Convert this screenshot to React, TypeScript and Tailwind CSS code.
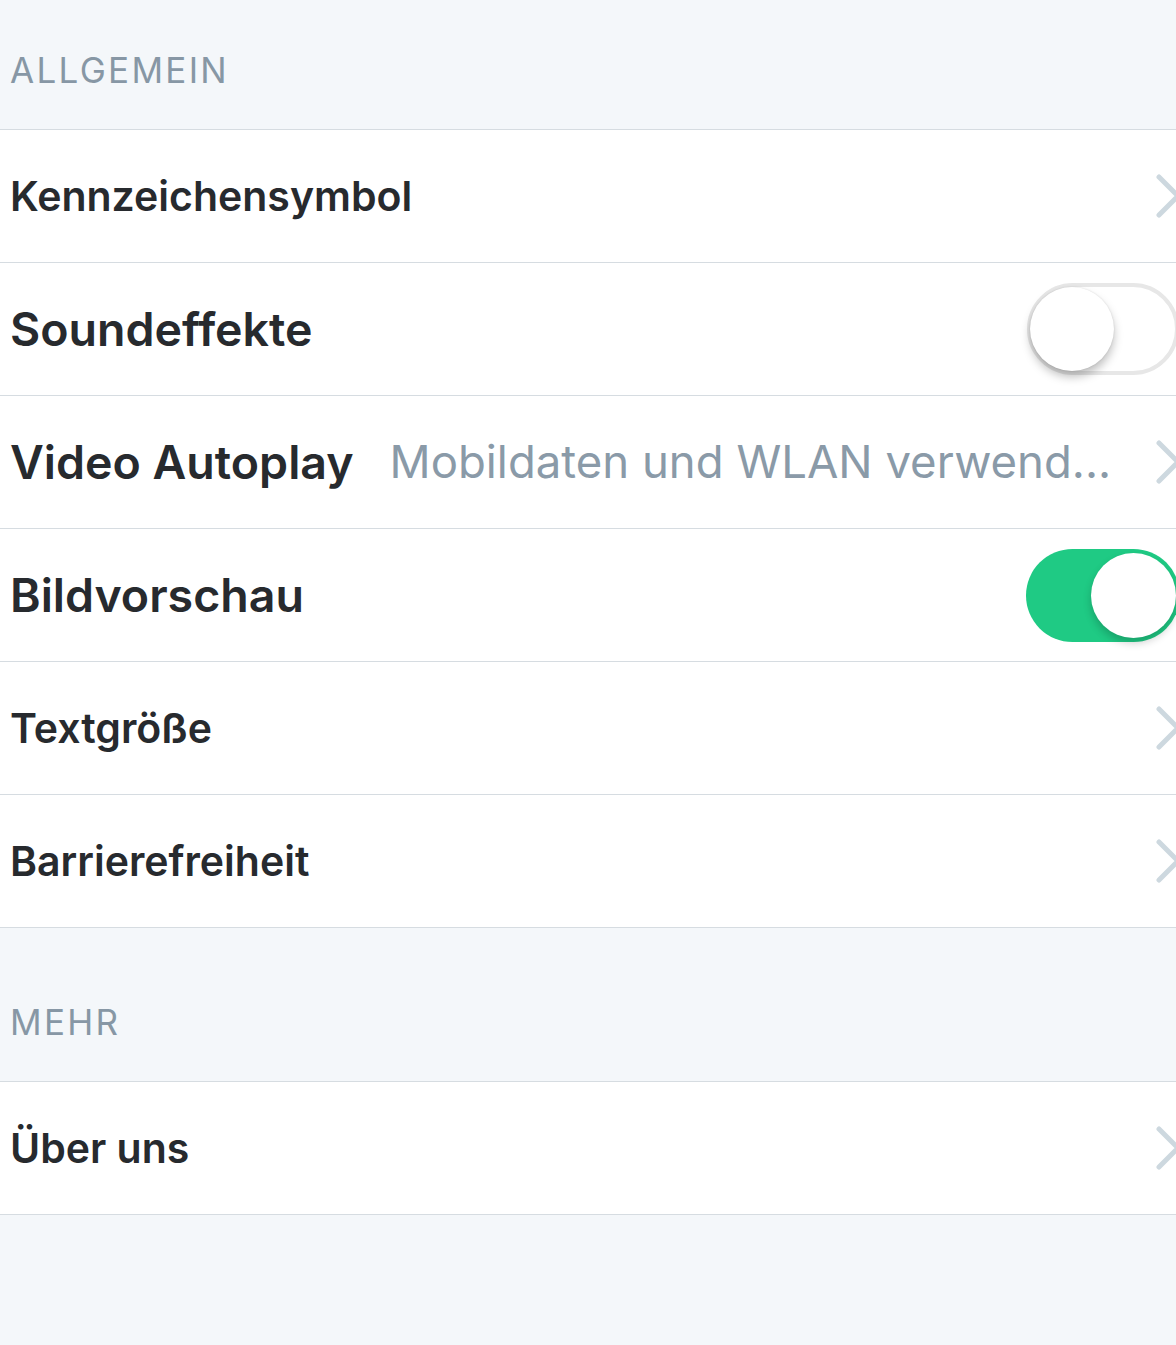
import React from "react";

const font = { fontFamily: "Inter, 'Noto Sans', sans-serif" };

function Chevron() {
  return (
    <svg width="28" height="46" viewBox="0 0 28 46" className="ml-auto mr-[-7px] shrink-0">
      <path d="M4 4 L23 23 L4 42" fill="none" stroke="#cdd8df" strokeWidth="5" strokeLinecap="round" strokeLinejoin="round" />
    </svg>
  );
}

function ToggleOff() {
  return (
    <div className="ml-auto mr-[-3px] shrink-0 relative w-[152px] h-[92px] rounded-full border-[4px] border-[#e7e7e7] bg-white">
      <div className="absolute left-[-1px] top-[0px] w-[84px] h-[84px] rounded-full bg-white shadow-[0_6px_10px_rgba(0,0,0,0.25),0_0_2px_rgba(0,0,0,0.12)]" />
    </div>
  );
}

function ToggleOn() {
  return (
    <div className="ml-auto mr-[-4px] shrink-0 relative w-[154px] h-[93px] rounded-full bg-[#1fca84]">
      <div className="absolute right-[4px] top-[4px] w-[85px] h-[85px] rounded-full bg-white shadow-[0_5px_8px_rgba(0,0,0,0.2)]" />
    </div>
  );
}

function Row({ children }: { children: React.ReactNode }) {
  return (
    <div className="flex items-center h-[133px] pl-[10px] bg-white border-b-[1.5px] border-[#d6dce1] overflow-hidden">
      {children}
    </div>
  );
}

function Label({ text }: { text: string }) {
  return <span className="text-[41px] font-semibold text-[#272a2e] whitespace-nowrap leading-none">{text}</span>;
}

function BigLabel({ text }: { text: string }) {
  return <span className="text-[46.5px] font-semibold text-[#272a2e] whitespace-nowrap leading-none">{text}</span>;
}

export default function App() {
  return (
    <div className="w-[1176px] h-[1345px] bg-[#f4f7fa] overflow-hidden" style={font}>
      <div className="h-[130px] pl-[10px] pt-[53px] border-b-[1.5px] border-[#d6dce1]">
        <span className="text-[35px] tracking-[2.3px] text-[#8797a5] leading-none">ALLGEMEIN</span>
      </div>
      <Row>
        <Label text="Kennzeichensymbol" />
        <Chevron />
      </Row>
      <Row>
        <BigLabel text="Soundeffekte" />
        <ToggleOff />
      </Row>
      <Row>
        <BigLabel text="Video Autoplay" />
        <span className="ml-[36px] text-[45.5px] text-[#8a9aa8] whitespace-nowrap leading-none">Mobildaten und WLAN verwend...</span>
        <Chevron />
      </Row>
      <Row>
        <BigLabel text="Bildvorschau" />
        <ToggleOn />
      </Row>
      <Row>
        <Label text="Textgröße" />
        <Chevron />
      </Row>
      <Row>
        <Label text="Barrierefreiheit" />
        <Chevron />
      </Row>
      <div className="h-[154px] pl-[10px] pt-[77px] border-b-[1.5px] border-[#d6dce1]">
        <span className="text-[35px] tracking-[2.3px] text-[#8797a5] leading-none">MEHR</span>
      </div>
      <Row>
        <Label text="Über uns" />
        <Chevron />
      </Row>
    </div>
  );
}
